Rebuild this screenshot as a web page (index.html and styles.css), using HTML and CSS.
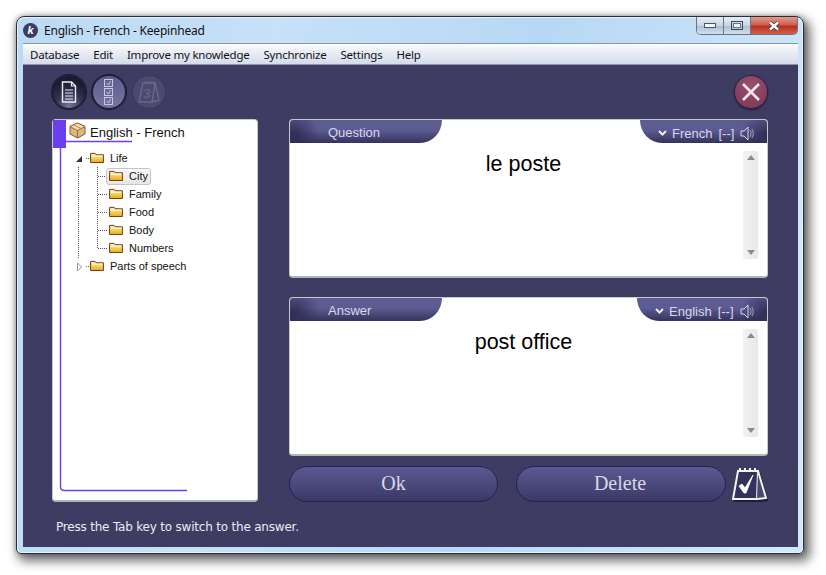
FILE: index.html
```html
<!DOCTYPE html>
<html lang="en">
<head>
<meta charset="utf-8">
<title>English - French - Keepinhead</title>
<link rel="stylesheet" href="styles.css">
</head>
<body>
<div class="window">
  <header class="titlebar">
    <span class="app-logo">k</span>
    <span class="title-text">English - French - Keepinhead</span>
    <div class="caption">
      <span class="cap cap-min"><svg width="12" height="6" viewBox="0 0 12 6"><rect x=".5" y=".5" width="11" height="4" fill="#f4f7fb" stroke="#4a5568"/></svg></span>
      <span class="cap cap-max"><svg width="12" height="10" viewBox="0 0 12 10"><rect x=".5" y=".5" width="11" height="8" fill="none" stroke="#3c4656"/><rect x="2.5" y="2.5" width="7" height="4" fill="#f4f7fb" stroke="#6a7484"/></svg></span>
      <span class="cap cap-close"><svg width="12" height="10" viewBox="0 0 12 10"><path d="M2 1.500 10 8.500M10 1.500 2 8.500" stroke="#3a3a3a" stroke-width="4"/><path d="M2 1.500 10 8.500M10 1.500 2 8.500" stroke="#fff" stroke-width="2.400"/></svg></span>
    </div>
  </header>
  <div class="client">
    <nav class="menubar">
      <span>Database</span><span>Edit</span><span>Improve my knowledge</span><span>Synchronize</span><span>Settings</span><span>Help</span>
    </nav>
    <main class="main">
      <div class="toolbar">
        <div class="tools">
          <button class="round round-active">
            <svg width="16" height="22" viewBox="0 0 16 22"><path d="M1.500 1h9l4 4v16h-13z" fill="none" stroke="#eee" stroke-width="1.400"/><path d="M10.500 1v4h4M4 9h8M4 12h8M4 15h8M4 18h8" fill="none" stroke="#eee" stroke-width="1.200"/></svg>
          </button>
          <button class="round round-lit">
            <svg width="12" height="26" viewBox="0 0 12 26"><g fill="none" stroke="#c9c9de"><rect x="1.500" y=".5" width="8" height="7"/><rect x="1.500" y="9.500" width="8" height="7"/><rect x="1.500" y="18.500" width="8" height="7"/><path d="M3.500 4l2 2 2-4M3.500 13l2 2 2-4M3.500 22l2 2 2-4"/></g></svg>
          </button>
          <button class="round round-off">
            <svg width="26" height="26" viewBox="0 0 26 26"><g fill="none" stroke="#6a6888" stroke-width="1.400"><path d="M7 4h12l-3 19H3z"/><path d="M19 4l4 17-7 2"/><path d="M9 2v3M12 2v3M15 2v3M18 2v3" stroke-width="1"/></g><text x="7" y="19" class="cal-num">3</text></svg>
          </button>
        </div>
        <button class="round-close">
          <svg width="20" height="20" viewBox="0 0 20 20"><path d="M2 2 18 18M18 2 2 18" stroke="#f2e4ea" stroke-width="2.600"/></svg>
        </button>
      </div>
      <div class="workspace">
        <aside class="tree">
          <svg class="tree-lines" width="204" height="380" viewBox="0 0 204 380">
            <path d="M7.500 28V366.500q0 4 4 4H134" fill="none" stroke="#6a3ff0" stroke-width="1.400"/>
            <rect x="0" y="0" width="13" height="28" fill="#6a3ff0"/>
            <path d="M13 21.500H79" stroke="#6a3ff0" stroke-width="1.400"/>
            <g fill="none" stroke="#555" stroke-dasharray="1 1">
              <path d="M25.500 47V138M44.500 47V129M45 56.500H55M45 74.500H55M45 92.500H55M45 110.500H55M45 128.500H55M33 38.500H36M33 146.500H36"/>
            </g>
            <path d="M23 42H29V36z" fill="#333"/>
            <path d="M24.500 143V151L28.500 147z" fill="#fff" stroke="#999"/>
          </svg>
          <div class="tree-head">
            <svg class="cube" width="17" height="17" viewBox="0 0 17 17"><path d="M8.500 1 16 4.500V12L8.500 16 1 12V4.500z" fill="#e0b678" stroke="#7a5a3a"/><path d="M1 4.500 8.500 8.500 16 4.500 8.500 1z" fill="#f4dcae" stroke="#7a5a3a" stroke-width=".8"/><path d="M8.500 8.500V16" stroke="#7a5a3a" stroke-width=".8"/><path d="M4.500 2.800 12 6.600" stroke="#b98b50"/></svg>
            <span>English - French</span>
          </div>
          <ul class="nodes">
            <li class="row row-1"><span class="node"><svg class="folder" width="14" height="11" viewBox="0 0 15 12"><use href="#folder"/></svg>Life</span></li>
            <li class="row row-2"><span class="node node-selected"><svg class="folder" width="14" height="11" viewBox="0 0 15 12"><use href="#folder"/></svg>City</span></li>
            <li class="row row-2"><span class="node"><svg class="folder" width="14" height="11" viewBox="0 0 15 12"><use href="#folder"/></svg>Family</span></li>
            <li class="row row-2"><span class="node"><svg class="folder" width="14" height="11" viewBox="0 0 15 12"><use href="#folder"/></svg>Food</span></li>
            <li class="row row-2"><span class="node"><svg class="folder" width="14" height="11" viewBox="0 0 15 12"><use href="#folder"/></svg>Body</span></li>
            <li class="row row-2"><span class="node"><svg class="folder" width="14" height="11" viewBox="0 0 15 12"><use href="#folder"/></svg>Numbers</span></li>
            <li class="row row-1"><span class="node"><svg class="folder" width="14" height="11" viewBox="0 0 15 12"><use href="#folder"/></svg>Parts of speech</span></li>
          </ul>
        </aside>
        <section class="study">
          <article class="card">
            <div class="card-head">
              <div class="tab tab-left">Question</div>
              <div class="tab tab-right tab-fr">
                <svg width="9" height="6" viewBox="0 0 9 6"><path d="M1 1l3.500 3.500L8 1" fill="none" stroke="#eee" stroke-width="2"/></svg>
                <span class="lang">French</span><span class="lvl">[--]</span>
                <svg width="15" height="15" viewBox="0 0 15 15"><path d="M1 5h3l4-4v13l-4-4H1z" fill="none" stroke="#d6d6ea"/><path d="M10 4q2 3.500 0 7M12 3q2.500 4.500 0 9" fill="none" stroke="#8f8fb2" stroke-width="1.200"/></svg>
              </div>
            </div>
            <div class="card-body">
              <div class="card-text">le poste</div>
              <div class="scroll"><i class="up"></i><i class="down"></i></div>
            </div>
          </article>
          <article class="card">
            <div class="card-head">
              <div class="tab tab-left">Answer</div>
              <div class="tab tab-right tab-en">
                <svg width="9" height="6" viewBox="0 0 9 6"><path d="M1 1l3.500 3.500L8 1" fill="none" stroke="#eee" stroke-width="2"/></svg>
                <span class="lang">English</span><span class="lvl">[--]</span>
                <svg width="15" height="15" viewBox="0 0 15 15"><path d="M1 5h3l4-4v13l-4-4H1z" fill="none" stroke="#d6d6ea"/><path d="M10 4q2 3.500 0 7M12 3q2.500 4.500 0 9" fill="none" stroke="#8f8fb2" stroke-width="1.200"/></svg>
              </div>
            </div>
            <div class="card-body">
              <div class="card-text">post office</div>
              <div class="scroll"><i class="up"></i><i class="down"></i></div>
            </div>
          </article>
          <div class="actions">
            <button class="pill pill-ok">Ok</button>
            <button class="pill pill-del">Delete</button>
            <svg class="notepad" width="36" height="36" viewBox="0 0 36 36"><path d="M26 6l8 27-9 1H2l2-4" fill="none" stroke="#1e1c38" stroke-width="2.500" transform="translate(1 1)"/><path d="M6 5h20l-1 28H1z" fill="#34325a" stroke="#f2f2f2" stroke-width="2"/><path d="M26 5l8 27-9 1" fill="#4a4870" stroke="#f2f2f2" stroke-width="2"/><path d="M8 2v4M13 2v4M18 2v4M23 2v4" stroke="#f2f2f2" stroke-width="2"/><path d="M7 20l3-2 3 4 8-13-7 18h-2z" fill="#fff" stroke="#fff" stroke-width=".8"/></svg>
          </div>
        </section>
      </div>
      <p class="status">Press the Tab key to switch to the answer.</p>
    </main>
  </div>
</div>
<svg class="defs" width="0" height="0"><defs>
  <linearGradient id="fg" x1="0" y1="0" x2="0" y2="1"><stop offset="0" stop-color="#fff4b0"/><stop offset="1" stop-color="#e8ac10"/></linearGradient>
  <g id="folder"><path d="M.5 11.500V1.500h5l1 1.500h8v8.500z" fill="url(#fg)" stroke="#6a2a0a"/><path d="M1.500 4.500h12" stroke="#fff"/></g>
</defs></svg>
</body>
</html>
```
FILE: styles.css
```css
* { box-sizing: border-box; }
html, body { margin: 0; height: 100%; }
body { padding: 16px 22px 21px 16px; background: #fff; overflow: hidden; }
ul, p { margin: 0; padding: 0; list-style: none; }
button { font: inherit; padding: 0; cursor: default; }
.defs { position: absolute; }

.window {
  width: 788px; height: 538px;
  display: flex; flex-direction: column;
  padding: 0 5px 6px 6px;
  border: 1px solid #2a2e34;
  border-radius: 8px 8px 5px 5px;
  background: linear-gradient(100deg, #bcdaf5 0%, #c6e1f8 30%, #b6d8f6 60%, #d4e8fb 100%);
  box-shadow: 4px 5px 11px 2px rgba(0,0,0,.58), 0 0 5px rgba(0,0,0,.3), inset 0 0 0 1px #e6f2fd;
}

.titlebar { height: 26px; flex: none; display: flex; align-items: center; position: relative; }
.app-logo {
  width: 15px; height: 15px; border-radius: 50%; background: #3e3b64; color: #fff;
  font: italic bold 11px/15px "Liberation Sans", sans-serif; text-align: center;
}
.title-text { margin-left: 6px; font: 12px "Noto Sans", sans-serif; color: #111; letter-spacing: -.2px; }
.caption {
  position: absolute; top: 0; right: 0; height: 18px; display: flex;
  border: 1px solid #6a7484; border-top: 0; border-radius: 0 0 5px 5px; overflow: hidden;
}
.cap { display: flex; align-items: center; justify-content: center; }
.cap-min, .cap-max { width: 27px; border-right: 1px solid #6a7484; background: linear-gradient(#e2edf8 0, #c7d6e6 50%, #aebfd2 55%, #cfe0ee 100%); }
.cap-close { width: 46px; background: linear-gradient(#e29a8c 0, #d2604f 45%, #b8301e 55%, #d4604a 100%); }

.client { flex: 1; display: flex; flex-direction: column; min-height: 0; border-top: 1px solid #8a96a6; background: #3f3c63; }
.menubar {
  height: 21px; flex: none; display: flex; gap: 14px; align-items: center; padding: 0 7px;
  background: linear-gradient(#fdfdfe 0, #eef0f7 30%, #d5dbeb 100%);
  border-bottom: 1px solid #8f95a8;
  font: 11.5px "Noto Sans", sans-serif; color: #111; letter-spacing: -.22px;
}

.main { flex: 1; display: flex; flex-direction: column; padding: 9px 30px 0 29px; }
.toolbar { height: 36px; flex: none; display: flex; justify-content: space-between; align-items: center; margin-bottom: 9px; }
.tools { display: flex; gap: 6px; }
.round, .round-close {
  width: 34px; height: 34px; border-radius: 50%; border: 1px solid #1c1a34;
  display: flex; align-items: center; justify-content: center;
}
.round-active { background: radial-gradient(circle at 50% 95%, #77759c 0, #333250 40%, #1c1b30 75%); box-shadow: 0 0 0 1px #1c1a34; }
.round-lit { background: linear-gradient(#5f5d8c, #7674a0); box-shadow: 0 0 0 1px #1c1a34; }
.round-off { background: #4b4970; border-color: #3a3858; }
.cal-num { font: italic 13px "Liberation Sans", sans-serif; fill: #6a6888; }
.round-close {
  background: radial-gradient(circle at 50% 30%, #96506e, #7a3755);
  border-color: #2c2440; box-shadow: 0 1px 2px #1c1a34;
}

.workspace { height: 383px; flex: none; display: flex; gap: 31px; }
.tree {
  width: 206px; height: 383px; position: relative; background: #fff;
  border: 1px solid #c8c8c8; border-bottom: 2px solid #b4b4b4; border-radius: 4px;
}
.tree-lines { position: absolute; left: 0; top: 0; }
.tree-head {
  height: 29px; display: flex; align-items: center; gap: 4px; padding: 0 0 0 16px;
  font: 13px "Liberation Sans", sans-serif; color: #111; position: relative;
}
.cube { margin-top: -9px; }
.tree-head span { margin-top: -4px; }
.nodes { position: relative; font: 11px "Liberation Sans", sans-serif; color: #111; }
.row { height: 18px; display: flex; align-items: center; }
.row-1 { padding-left: 34px; }
.row-2 { padding-left: 53px; }
.node { display: inline-flex; align-items: center; height: 17px; padding: 0 2px; gap: 6px; border: 1px solid transparent; border-radius: 3px; }
.folder { margin-top: -2px; }
.node-selected { background: linear-gradient(#f8f8f8, #e6e6e6); border-color: #c4c4c4; }

.study { width: 479px; display: flex; flex-direction: column; }
.card {
  height: 159px; flex: none; margin-bottom: 19px; display: flex; flex-direction: column; background: #fff;
  border: 1px solid #c8c8c8; border-bottom: 2px solid #b4b4b4; border-radius: 4px; overflow: hidden;
}
.card:nth-child(2) { margin-bottom: 10px; }
.card-head { height: 23px; flex: none; display: flex; justify-content: space-between; }
.tab {
  height: 23px; display: flex; align-items: center; color: #d8d8ee;
  font: 13px "Liberation Sans", sans-serif;
}
.tab-left {
  width: 152px; padding: 2px 0 0 38px; border-bottom-right-radius: 22px 23px;
  background: radial-gradient(ellipse 26px 22px at 4px 14px, rgba(44,42,80,.9), rgba(44,42,80,0)), linear-gradient(#5c5b92 0, #5c5b92 45%, #35325a 100%);
}
.tab-right { gap: 5px; padding-top: 3px; border-bottom-left-radius: 22px 23px; background: radial-gradient(ellipse 26px 22px at 100% 14px, rgba(44,42,80,.9), rgba(44,42,80,0)), linear-gradient(#5c5b92 0, #5c5b92 45%, #35325a 100%); }
.tab-fr { width: 127px; padding-left: 18px; }
.tab-en { width: 130px; padding-left: 18px; }
.lvl { margin-left: 1px; margin-right: 1px; }
.card-body { flex: 1; display: flex; padding: 8px 9px 17px 0; min-height: 0; }
.card-text { flex: 1; margin-top: -1px; padding-left: 14px; text-align: center; font: 21.5px/28px "Liberation Sans", sans-serif; color: #000; }
.scroll { width: 15px; background: linear-gradient(90deg, #f2f2f2, #e8e8e8); display: flex; flex-direction: column; justify-content: space-between; align-items: center; padding: 4px 0; border-radius: 2px; }
.up { border: 4px solid transparent; border-top: 0; border-bottom: 5px solid #8c8c8c; }
.down { border: 4px solid transparent; border-bottom: 0; border-top: 5px solid #8c8c8c; }

.actions { display: flex; align-items: center; height: 36px; }
.pill {
  height: 36px; border-radius: 18px; padding: 0 0 2px;
  border: 1px solid #23205a; color: #d8d8e8;
  background: linear-gradient(#5a5890 0, #4c4a7c 50%, #3a3866 100%);
  font: 20px "Liberation Serif", serif;
}
.pill-ok { width: 209px; margin-right: 18px; }
.pill-del { width: 210px; margin-right: 6px; padding-right: 2px; }
.notepad { flex: none; }

.status { margin-top: 18px; padding-left: 4px; font: 12px "DejaVu Sans", sans-serif; color: #eceaf4; letter-spacing: -.2px; }
```
